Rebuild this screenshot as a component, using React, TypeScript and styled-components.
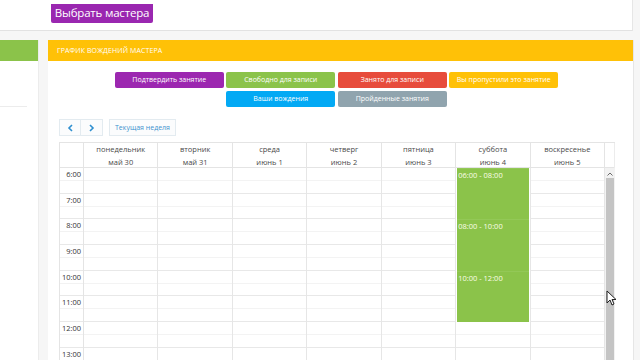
import React from 'react';
import styled, {createGlobalStyle} from 'styled-components';

const GlobalStyle = createGlobalStyle`
  html, body {
    margin: 0;
    padding: 0;
  }
  body {
    background: #f6f6f6;
    font-family: "Open Sans", "Liberation Sans", sans-serif;
    overflow: hidden;
  }
`

const days = [
    {name: 'понедельник', date: 'май 30'},
    {name: 'вторник', date: 'май 31'},
    {name: 'среда', date: 'июнь 1'},
    {name: 'четверг', date: 'июнь 2'},
    {name: 'пятница', date: 'июнь 3'},
    {name: 'суббота', date: 'июнь 4'},
    {name: 'воскресенье', date: 'июнь 5'},
]

const hours = [6, 7, 8, 9, 10, 11, 12, 13]

const legendTop = [
    {label: 'Подтвердить занятие', color: '#9c27b0'},
    {label: 'Свободно для записи', color: '#8bc34a'},
    {label: 'Занято для записи', color: '#e74c3c'},
    {label: 'Вы пропустили это занятие', color: '#ffc107'},
]

const legendBottom = [
    {label: 'Ваши вождения', color: '#03a9f4'},
    {label: 'Пройденные занятия', color: '#90a4ae'},
]

const saturdayEvents = ['06:00 - 08:00', '08:00 - 10:00', '10:00 - 12:00']

const SLOT = 12.85

export default function App() {
    return (
        <Page>
            <GlobalStyle/>
            <TopBar>
                <PickButton>Выбрать мастера</PickButton>
            </TopBar>
            <Content>
                <LeftPanel>
                    <LeftHeader/>
                    <LeftItem/>
                </LeftPanel>
                <MainPanel>
                    <PanelHeader>График вождений мастера</PanelHeader>
                    <PanelBody>
                        <Legend>
                            <LegendRow>
                                {legendTop.map(l => (
                                    <LegendButton key={l.label} $color={l.color}>{l.label}</LegendButton>
                                ))}
                            </LegendRow>
                            <LegendRow>
                                {legendBottom.map(l => (
                                    <LegendButton key={l.label} $color={l.color}>{l.label}</LegendButton>
                                ))}
                            </LegendRow>
                        </Legend>
                        <Toolbar>
                            <NavGroup>
                                <NavButton>
                                    <svg width="7" height="8" viewBox="0 0 7 8">
                                        <path d="M5 1 L2 4 L5 7" fill="none" stroke="#2f8fd0" strokeWidth="1.6"/>
                                    </svg>
                                </NavButton>
                                <NavButton>
                                    <svg width="7" height="8" viewBox="0 0 7 8">
                                        <path d="M2 1 L5 4 L2 7" fill="none" stroke="#2f8fd0" strokeWidth="1.6"/>
                                    </svg>
                                </NavButton>
                            </NavGroup>
                            <TodayButton>Текущая неделя</TodayButton>
                        </Toolbar>
                        <Calendar>
                            <HeadRow>
                                <HeadCell/>
                                {days.map(d => (
                                    <HeadCell key={d.name}>
                                        <span>{d.name}</span>
                                        <span>{d.date}</span>
                                    </HeadCell>
                                ))}
                                <HeadScroll/>
                            </HeadRow>
                            <BodyRow>
                                <TimeColumn>
                                    {hours.map(h => (
                                        <HourLabel key={h}>
                                            <span>{h}:00</span>
                                        </HourLabel>
                                    ))}
                                </TimeColumn>
                                {days.map((d, i) => (
                                    <DayColumn key={d.name}>
                                        {i === 5 ? (
                                            <>
                                                {saturdayEvents.map(e => (
                                                    <EventBlock key={e}>{e}</EventBlock>
                                                ))}
                                                {hours.slice(6).flatMap(h => [
                                                    <Slot key={h + 'a'} $minor/>,
                                                    <Slot key={h + 'b'}/>,
                                                ])}
                                            </>
                                        ) : (
                                            hours.flatMap(h => [
                                                <Slot key={h + 'a'} $minor/>,
                                                <Slot key={h + 'b'}/>,
                                            ])
                                        )}
                                    </DayColumn>
                                ))}
                                <ScrollTrack>
                                    <ScrollArrow>
                                        <svg width="6" height="4" viewBox="0 0 6 4">
                                            <path d="M0.5 3.5 L3 1 L5.5 3.5" fill="none" stroke="#6a6a6a" strokeWidth="1"/>
                                        </svg>
                                    </ScrollArrow>
                                    <ScrollThumb/>
                                </ScrollTrack>
                            </BodyRow>
                        </Calendar>
                    </PanelBody>
                </MainPanel>
            </Content>
            <Cursor width="11" height="16" viewBox="0 0 11 16">
                <path d="M1 1 L1 13 L4 10 L6 15 L8 14 L6 9.5 L10 9.5 Z" fill="#fff" stroke="#222" strokeWidth="1"
                      strokeLinejoin="round"/>
            </Cursor>
        </Page>
    );
}

const Page = styled.div`
    position: relative;
    width: 640px;
    height: 360px;
    overflow: hidden;
`

const TopBar = styled.div`
    box-sizing: border-box;
    width: 633px;
    height: 31px;
    padding-left: 51px;
    background: #fff;
    border-right: 1px solid #e6e6e6;
    border-bottom: 1px solid #e2e2e2;
`

const PickButton = styled.div`
    display: inline-block;
    box-sizing: border-box;
    width: 102px;
    height: 19px;
    line-height: 18px;
    text-align: center;
    background: #9a27b0;
    color: #fff;
    font-size: 11.5px;
    letter-spacing: -0.2px;
    border-radius: 0 0 2px 2px;
`

const Content = styled.div`
    display: flex;
    gap: 9px;
    margin-top: 9px;
`

const LeftPanel = styled.div`
    width: 38px;
    height: 330px;
    background: #fff;
    border-right: 1px solid #ececec;
`

const LeftHeader = styled.div`
    height: 21px;
    background: #8bc34a;
`

const LeftItem = styled.div`
    width: 27px;
    height: 45px;
    border-bottom: 1px solid #ececec;
`

const MainPanel = styled.div`
    box-sizing: border-box;
    width: 586px;
    height: 340px;
    background: #fff;
    border-right: 1px solid #e6e6e6;
`

const PanelHeader = styled.div`
    height: 21px;
    line-height: 21px;
    padding-left: 9px;
    background: #ffc107;
    color: #fff;
    font-size: 7px;
    text-transform: uppercase;
    letter-spacing: 0.1px;
`

const PanelBody = styled.div`
    padding: 11px 19px 0 11px;
`

const Legend = styled.div`
    display: flex;
    flex-direction: column;
    align-items: center;
    gap: 3px;
`

const LegendRow = styled.div`
    display: flex;
    justify-content: center;
    gap: 2.5px;
`

const LegendButton = styled.div<{ $color: string }>`
    width: 109px;
    height: 16px;
    line-height: 16px;
    text-align: center;
    background: ${p => p.$color};
    color: #fff;
    font-size: 7px;
    border-radius: 2px;
    white-space: nowrap;
`

const Toolbar = styled.div`
    display: flex;
    align-items: center;
    gap: 6px;
    margin-top: 12px;
`

const NavGroup = styled.div`
    display: flex;
`

const NavButton = styled.div`
    box-sizing: border-box;
    display: flex;
    align-items: center;
    justify-content: center;
    width: 22px;
    height: 17px;
    background: #fbfcfd;
    border: 1px solid #e3ebf0;

    & + & {
        border-left: none;
    }
`

const TodayButton = styled.div`
    box-sizing: border-box;
    height: 17px;
    line-height: 15px;
    padding: 0 5px;
    background: #fbfcfd;
    border: 1px solid #e3ebf0;
    color: #3d93cf;
    font-size: 7px;
`

const Calendar = styled.div`
    width: 555px;
    margin-top: 6px;
    border-top: 1px solid #e4e4e4;
    border-left: 1px solid #e4e4e4;
`

const columns = `24px repeat(7, 1fr) 10px`

const HeadRow = styled.div`
    box-sizing: border-box;
    display: grid;
    grid-template-columns: ${columns};
    height: 25px;
    border-bottom: 1px solid #e4e4e4;
`

const HeadCell = styled.div`
    display: flex;
    flex-direction: column;
    align-items: center;
    justify-content: center;
    border-right: 1px solid #e4e4e4;
    color: #4a4a4a;
    font-size: 7.5px;
    line-height: 13px;
`

const HeadScroll = styled.div`
    border-right: 1px solid #ececec;
`

const BodyRow = styled.div`
    display: grid;
    grid-template-columns: ${columns};
`

const TimeColumn = styled.div`
    border-right: 1px solid #e4e4e4;
`

const HourLabel = styled.div`
    box-sizing: border-box;
    height: ${SLOT * 2}px;
    padding: 0 2px 0 0;
    text-align: right;
    color: #333;
    font-size: 7.5px;
    line-height: 12px;
    border-bottom: 1px solid #e8e8e8;
    background: linear-gradient(to bottom, transparent ${SLOT - 1}px, #f2f2f2 ${SLOT - 1}px, #f2f2f2 ${SLOT}px, transparent ${SLOT}px);
`

const DayColumn = styled.div`
    display: flex;
    flex-direction: column;
    border-right: 1px solid #e6e6e6;
`

const Slot = styled.div<{ $minor?: boolean }>`
    box-sizing: border-box;
    height: ${SLOT}px;
    border-bottom: 1px solid ${p => (p.$minor ? '#f3f3f3' : '#e8e8e8')};
`

const EventBlock = styled.div`
    box-sizing: border-box;
    height: ${SLOT * 4}px;
    margin: 0 1px;
    padding: 1px 1px 0;
    background: #8bc34a;
    color: #fbfde9;
    font-size: 7.5px;
    line-height: 11px;
    border-top: 1px solid #93c857;
`

const ScrollTrack = styled.div`
    display: flex;
    flex-direction: column;
    align-items: center;
    background: #f2f2f2;
`

const ScrollArrow = styled.div`
    display: flex;
    align-items: center;
    justify-content: center;
    height: 9px;
    padding-top: 1px;
`

const ScrollThumb = styled.div`
    width: 8px;
    height: 200px;
    background: #c4c4c4;
`

const Cursor = styled.svg`
    position: absolute;
    left: 606px;
    top: 290px;
`
